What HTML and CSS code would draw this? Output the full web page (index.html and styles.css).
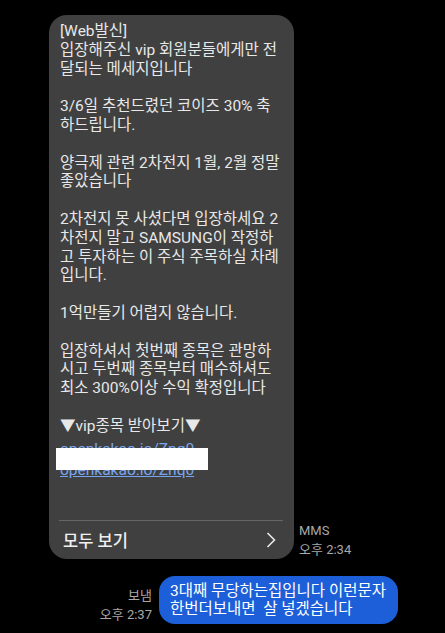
FILE: index.html
```html
<!DOCTYPE html>
<html>
<head>
  <meta charset="utf-8">
  <title>메시지</title>
  <link rel="stylesheet" href="styles.css">
</head>
<body>
  <div class="thread">
    <div class="row row-in">
      <div class="bubble bubble-in">
        <div class="body-text">[Web발신]
입장해주신 vip 회원분들에게만 전
달되는 메세지입니다

3/6일 추천드렸던 코이즈 30% 축
하드립니다.

양극제 관련 2차전지 1월, 2월 정말
좋았습니다

2차전지 못 사셨다면 입장하세요 2
차전지 말고 SAMSUNG이 작정하
고 투자하는 이 주식 주목하실 차례
입니다.

1억만들기 어렵지 않습니다.

입장하셔서 첫번째 종목은 관망하
시고 두번째 종목부터 매수하셔도
최소 300%이상 수익 확정입니다

▼vip종목 받아보기▼</div>
        <div class="links">
          <a class="link">openkakao.io/Zng0</a>
          <a class="link">openkakao.io/Zhq0</a>
          <div class="redact"></div>
        </div>
        <div class="more">
          <span>모두 보기</span>
          <svg class="chev" width="10" height="16" viewBox="0 0 10 16"><path d="M1.5 1 L8.5 8 L1.5 15" fill="none" stroke="#e8e8e8" stroke-width="1.6"/></svg>
        </div>
      </div>
      <div class="meta meta-in">
        <div>MMS</div>
        <div>오후 2:34</div>
      </div>
    </div>

    <div class="row row-out">
      <div class="meta meta-out">
        <div>보냄</div>
        <div>오후 2:37</div>
      </div>
      <div class="bubble bubble-out">3대째 무당하는집입니다 이런문자<br>한번더보내면&nbsp; 살 넣겠습니다</div>
    </div>
  </div>
</body>
</html>
```

FILE: styles.css
```css
body {
  margin: 0;
  background-color: #000;
  font-family: Roboto, "Noto Sans CJK KR", sans-serif;
  color: #e8e8e8;
}
.thread {
  width: 445px;
  height: 633px;
  overflow: hidden;
  padding-top: 15px;
  box-sizing: border-box;
}
.row {
  display: flex;
  align-items: flex-end;
}
.row-in {
  padding-left: 49px;
}
.row-out {
  justify-content: flex-end;
  padding-right: 47px;
  margin-top: 17px;
}
.bubble-in {
  width: 245px;
  background-color: #404040;
  border-radius: 18px;
  padding: 7px 0 0;
  box-sizing: border-box;
}
.body-text {
  padding: 0 11px;
  font-size: 15.5px;
  line-height: 18.8px;
  white-space: pre;
}
.links {
  position: relative;
  margin-top: 3px;
  padding: 0 11px;
  font-size: 15.5px;
  line-height: 21px;
}
.link {
  display: block;
  color: #78a6ee;
  text-decoration: underline;
}
.redact {
  position: absolute;
  left: 7px;
  top: 9px;
  width: 152px;
  height: 22px;
  background-color: #fff;
}
.more {
  margin: 39px 11px 0 10px;
  border-top: 1px solid #666;
  height: 38px;
  display: flex;
  align-items: center;
  justify-content: space-between;
  padding: 0 7px 0 4px;
  font-size: 16.5px;
  font-weight: 500;
  color: #f0f0f0;
}
.chev {
  display: block;
}
.meta {
  font-size: 13px;
  line-height: 19px;
  color: #a8a8a8;
}
.meta-in {
  margin-left: 5px;
}
.meta-out {
  margin-right: 7px;
  text-align: right;
}
.bubble-out {
  background-color: #1c5fd8;
  color: #fff;
  border-radius: 16px;
  padding: 6px 12px 6px 11px;
  font-size: 15.5px;
  line-height: 18px;
  white-space: nowrap;
}
```
